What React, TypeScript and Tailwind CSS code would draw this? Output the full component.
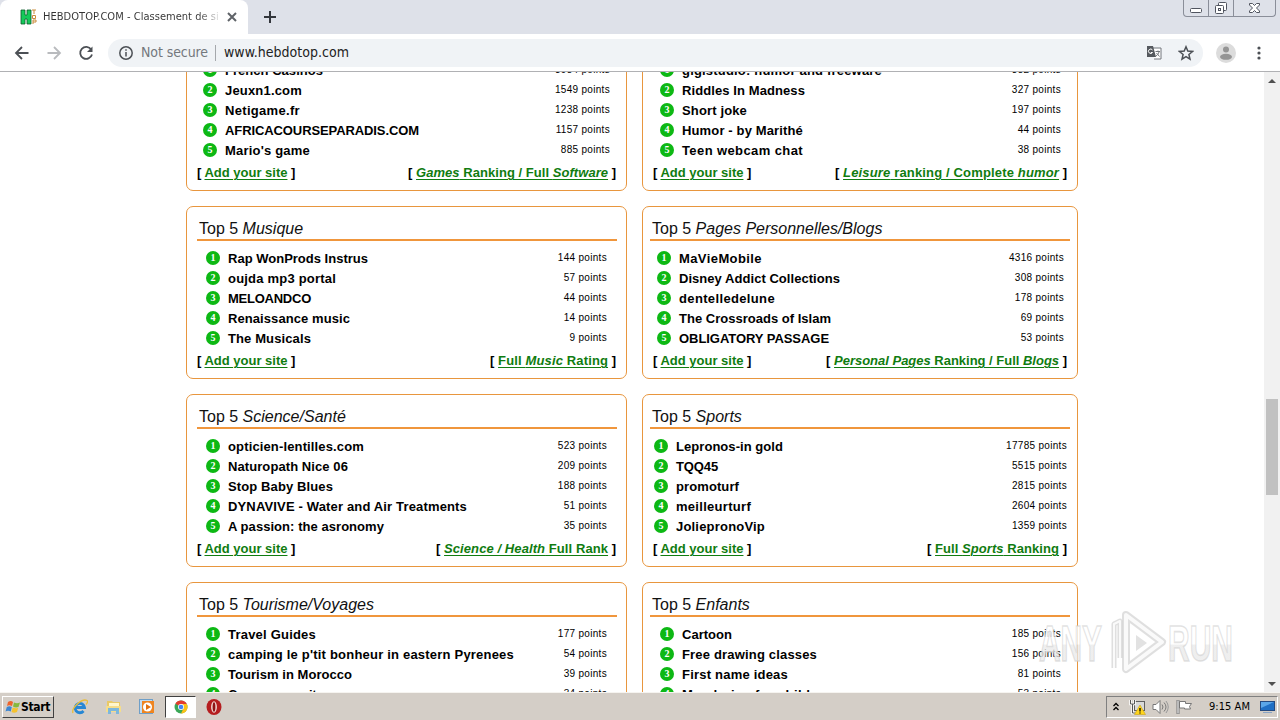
import React, { useLayoutEffect, useRef } from 'react';
import { clsx } from 'clsx';

interface Site {
    name: string;
    points: number;
    width: number;
}

interface Category {
    title: string;
    sites: Site[];
    more: React.ReactNode;
    moreWidth: number;
    // horizontal inset of the list, the tables are centered in their card
    rowClass: string;
}

const CATEGORIES: Category[] = [
    {
        title: 'Jeux',
        rowClass: 'pl-[6px] pr-[7px]',
        more: <><i>Games</i> Ranking / Full <i>Software</i></>,
        moreWidth: 192,
        sites: [
            { name: 'French Casinos', points: 3984, width: 98 },
            { name: 'Jeuxn1.com', points: 1549, width: 77 },
            { name: 'Netigame.fr', points: 1238, width: 75 },
            { name: 'AFRICACOURSEPARADIS.COM', points: 1157, width: 194 },
            { name: "Mario's game", points: 885, width: 85 },
        ],
    },
    {
        title: 'Loisirs/Humour',
        rowClass: 'pl-[10px] pr-[9px]',
        more: <><i>Leisure</i> ranking / Complete <i>humor</i></>,
        moreWidth: 216,
        sites: [
            { name: 'gigistudio: humor and freeware', points: 382, width: 200 },
            { name: 'Riddles In Madness', points: 327, width: 123 },
            { name: 'Short joke', points: 197, width: 65 },
            { name: 'Humor - by Marithé', points: 44, width: 121 },
            { name: 'Teen webcam chat', points: 38, width: 121 },
        ],
    },
    {
        title: 'Musique',
        rowClass: 'pl-[9px] pr-[10px]',
        more: <>Full <i>Music</i> Rating</>,
        moreWidth: 110,
        sites: [
            { name: 'Rap WonProds Instrus', points: 144, width: 140 },
            { name: 'oujda mp3 portal', points: 57, width: 108 },
            { name: 'MELOANDCO', points: 44, width: 83 },
            { name: 'Renaissance music', points: 14, width: 122 },
            { name: 'The Musicals', points: 9, width: 83 },
        ],
    },
    {
        title: 'Pages Personnelles/Blogs',
        rowClass: 'pl-[7px] pr-[6px]',
        more: <><i>Personal Pages</i> Ranking / Full <i>Blogs</i></>,
        moreWidth: 225,
        sites: [
            { name: 'MaVieMobile', points: 4316, width: 83 },
            { name: 'Disney Addict Collections', points: 308, width: 161 },
            { name: 'dentelledelune', points: 178, width: 96 },
            { name: 'The Crossroads of Islam', points: 69, width: 152 },
            { name: 'OBLIGATORY PASSAGE', points: 53, width: 150 },
        ],
    },
    {
        title: 'Science/Santé',
        rowClass: 'pl-[9px] pr-[10px]',
        more: <><i>Science / Health</i> Full Rank</>,
        moreWidth: 164,
        sites: [
            { name: 'opticien-lentilles.com', points: 523, width: 136 },
            { name: 'Naturopath Nice 06', points: 209, width: 120 },
            { name: 'Stop Baby Blues', points: 188, width: 105 },
            { name: 'DYNAVIVE - Water and Air Treatments', points: 51, width: 239 },
            { name: 'A passion: the asronomy', points: 35, width: 156 },
        ],
    },
    {
        title: 'Sports',
        rowClass: 'pl-[4px] pr-[3px]',
        more: <>Full <i>Sports</i> Ranking</>,
        moreWidth: 124,
        sites: [
            { name: 'Lepronos-in gold', points: 17785, width: 107 },
            { name: 'TQQ45', points: 5515, width: 42 },
            { name: 'promoturf', points: 2815, width: 63 },
            { name: 'meilleurturf', points: 2604, width: 75 },
            { name: 'JoliepronoVip', points: 1359, width: 89 },
        ],
    },
    {
        title: 'Tourisme/Voyages',
        rowClass: 'pl-[9px] pr-[10px]',
        more: <>Full <i>Travel</i> Ranking</>,
        moreWidth: 122,
        sites: [
            { name: 'Travel Guides', points: 177, width: 88 },
            { name: "camping le p'tit bonheur in eastern Pyrenees", points: 54, width: 286 },
            { name: 'Tourism in Morocco', points: 39, width: 124 },
            { name: 'Cannes security', points: 34, width: 95 },
        ],
    },
    {
        title: 'Enfants',
        rowClass: 'pl-[10px] pr-[9px]',
        more: <>Full <i>Kids</i> Ranking</>,
        moreWidth: 112,
        sites: [
            { name: 'Cartoon', points: 185, width: 50 },
            { name: 'Free drawing classes', points: 156, width: 135 },
            { name: 'First name ideas', points: 81, width: 106 },
            { name: 'Mandarine for children', points: 53, width: 150 },
        ],
    },
];

// Spreads the letters so that the text takes the given width
const FitText: React.FC<{ width: number; className?: string; children: React.ReactNode }> = ({ width, className, children }) => {
    const ref = useRef<HTMLSpanElement>(null);

    useLayoutEffect(() => {
        const el = ref.current;
        if (!el) return;
        el.style.letterSpacing = '0px';
        const natural = el.getBoundingClientRect().width;
        const count = el.textContent?.length || 1;
        el.style.letterSpacing = `${(width - natural) / count}px`;
    }, [width]);

    return <span ref={ref} className={clsx('whitespace-nowrap', className)}>{children}</span>;
};

const FooterLink: React.FC<{ width: number; children: React.ReactNode }> = ({ width, children }) => (
    <span className="whitespace-pre">
        {'[ '}<FitText width={width} className="text-[#107c10] underline decoration-1 underline-offset-2">{children}</FitText>{' ]'}
    </span>
);

const CategoryCard: React.FC<{ category: Category; right: boolean }> = ({ category, right }) => (
    <section className={clsx('h-[173px] rounded-[7px] border border-[#e8963e] pt-[11px]', right ? 'px-[7px]' : 'px-[10px]')}>
        <h2 className="h-[23px] w-[420px] border-b-2 border-[#f0963c] pl-[2px] text-[16px] leading-[21px] text-[#111]">
            Top 5 <i>{category.title}</i>
        </h2>
        <ol className={clsx('mt-[7px] w-[420px]', category.rowClass)}>
            {category.sites.map((site, i) => (
                <li key={site.name} className="flex h-5 items-center">
                    <span className="mr-2 flex size-[14px] items-center justify-center rounded-full bg-[#0db814] font-['Liberation_Serif'] text-[10px] leading-[14px] font-bold text-white">
                        {i + 1}
                    </span>
                    <FitText width={site.width} className="pt-0.5 text-[13px] leading-[18px] font-bold">{site.name}</FitText>
                    <span className="ml-auto text-[10px] leading-[18px] tracking-[0.3px]">{site.points} points</span>
                </li>
            ))}
        </ol>
        <div className={clsx('flex w-[420px] justify-between pt-[3px] text-[13px] leading-5 font-bold', right ? 'pr-[3px] pl-[3px]' : 'pr-px')}>
            <FooterLink width={83}>Add your site</FooterLink>
            <FooterLink width={category.moreWidth}>{category.more}</FooterLink>
        </div>
    </section>
);

const TabStrip = () => (
    <header className="flex h-[34px] bg-[#dee1e9]">
        <div className="flex h-[34px] w-[248px] items-center rounded-t-[8px] bg-white pl-[20px]">
            <svg width="17" height="16" viewBox="0 0 17 16">
                <path d="M1 1h4v5h2V1h4v14H7v-5H5v5H1z" fill="#14c95a" stroke="#0a5a2a" strokeWidth=".8" />
                <path d="M12 1h4M14 1v4M12.500 6.500h3v3h-3zM13 15v-4h3v2h-3" stroke="#c98a3a" fill="none" />
            </svg>
            <span className="ml-[6px] w-[175px] overflow-hidden bg-linear-to-r from-[#333] from-88% to-[#ddd] bg-clip-text font-['DejaVu_Sans_Condensed','DejaVu_Sans'] text-[11px] whitespace-nowrap text-transparent">
                <FitText width={191}>HEBDOTOP.COM - Classement de sites</FitText>
            </span>
            <svg className="ml-[9px]" width="10" height="10" viewBox="0 0 10 10">
                <path d="M1 1l8 8M9 1L1 9" stroke="#5f6368" strokeWidth="2" />
            </svg>
        </div>
        <svg className="mt-[10px] ml-[15px]" width="14" height="14" viewBox="0 0 14 14">
            <path d="M7 1v12M1 7h12" stroke="#33363c" strokeWidth="2" />
        </svg>
        <div className="mr-[4px] ml-auto flex h-[17px] w-[93px] rounded-b-[4px] border border-t-0 border-[#8a8e99] text-[#50545f]">
            <div className="w-[25px] border-r border-[#8a8e99]">
                <svg width="24" height="16" viewBox="0 0 24 16">
                    <rect x="6.500" y="8.500" width="11" height="4" rx="1" fill="#fff" stroke="currentColor" />
                </svg>
            </div>
            <div className="w-[25px] border-r border-[#8a8e99]">
                <svg width="24" height="16" viewBox="0 0 24 16" fill="#fff" stroke="currentColor">
                    <rect x="9.500" y="2.500" width="8" height="8" rx="1" />
                    <rect x="6.500" y="5.500" width="8" height="8" rx="1" />
                    <rect x="9.500" y="8.500" width="2" height="2" />
                </svg>
            </div>
            <svg width="41" height="16" viewBox="0 0 41 16">
                <path d="M15.500 3.500h3l2 2 2-2h3v1.500l-3 3 3 3v1.500h-3l-2-2-2 2h-3v-1.500l3-3-3-3z" fill="#fff" stroke="currentColor" />
            </svg>
        </div>
    </header>
);

const Toolbar = () => (
    <div className="flex h-[38px] items-center border-b border-[#b0b1b4] bg-white pl-[14px] text-[#4c5055]">
        <svg width="16" height="16" viewBox="0 0 16 16" fill="none" stroke="currentColor" strokeWidth="1.800">
            <path d="M14.500 8H2M8 2L2 8l6 6" />
        </svg>
        <svg className="ml-[16px] text-[#b9bbbe]" width="16" height="16" viewBox="0 0 16 16" fill="none" stroke="currentColor" strokeWidth="1.800">
            <path d="M1.500 8H14M8 2l6 6-6 6" />
        </svg>
        <svg className="ml-[16px]" width="16" height="16" viewBox="0 0 16 16">
            <path d="M13.200 4.500A6 6 0 1 0 14 9.500" fill="none" stroke="currentColor" strokeWidth="1.800" />
            <path d="M14.500 1.500v5.500H9z" fill="currentColor" />
        </svg>
        <div className="ml-[14px] flex h-7 w-[1095px] items-center rounded-full bg-[#f0f3f6] pl-[11px] font-['DejaVu_Sans_Condensed','DejaVu_Sans'] text-[14px]">
            <svg width="14" height="14" viewBox="0 0 14 14">
                <circle cx="7" cy="7" r="6.200" fill="none" stroke="currentColor" strokeWidth="1.500" />
                <path d="M7 6v4.500M7 3.300v1.500" stroke="currentColor" strokeWidth="1.500" />
            </svg>
            <FitText width={67} className="ml-[8px] text-[#74787d]">Not secure</FitText>
            <span className="ml-[7px] h-4 w-px bg-[#a5a8ac]" />
            <FitText width={125} className="ml-[8px] text-[#222]">www.hebdotop.com</FitText>
            <svg className="ml-auto" width="16" height="16" viewBox="0 0 16 16">
                <path d="M6 3h9v11H8" fill="#fff" stroke="#73777c" />
                <path d="M1 1h6l3 11H1z" fill="#55595e" />
                <path d="M6.500 5A2.200 2.200 0 1 0 6.500 7.500H4.800" fill="none" stroke="#fff" />
                <path d="M9.500 6.500h4.500M12 5.500v1M13 7c-.5 2-1.500 3-3 4M10.500 8l3 3.500" fill="none" stroke="#73777c" />
            </svg>
            <svg className="mr-[9px] ml-[16px]" width="16" height="16" viewBox="0 0 16 16">
                <path d="M8 1.800l1.800 4.300 4.700.4-3.600 3 1.100 4.600L8 11.700l-4 2.400 1.100-4.600-3.600-3 4.700-.4z" fill="none" stroke="currentColor" strokeWidth="1.500" />
            </svg>
        </div>
        <svg className="ml-[13px]" width="20" height="20" viewBox="0 0 20 20">
            <circle cx="10" cy="10" r="10" fill="#dcdcdc" />
            <circle cx="10" cy="6.500" r="3" fill="#959595" />
            <ellipse cx="10" cy="13.800" rx="6" ry="3" fill="#959595" />
        </svg>
        <svg className="ml-[21px]" width="4" height="14" viewBox="0 0 4 14" fill="currentColor">
            <circle cx="2" cy="2" r="1.600" /><circle cx="2" cy="7" r="1.600" /><circle cx="2" cy="12" r="1.600" />
        </svg>
    </div>
);

const Scrollbar = () => (
    <div className="flex w-4 flex-col items-center bg-[#f1f1f1] pt-[7px] pb-[6px]">
        <svg width="8" height="4" viewBox="0 0 8 4"><path d="M0 4l4-4 4 4z" fill="#505050" /></svg>
        <div className="mt-[316px] h-[96px] w-3 bg-[#c1c1c1]" />
        <svg className="mt-auto" width="8" height="4" viewBox="0 0 8 4"><path d="M0 0l4 4 4-4z" fill="#505050" /></svg>
    </div>
);

const Watermark = () => (
    <svg className="absolute top-[532px] left-[1036px]" width="204" height="76" viewBox="0 0 204 76">
        <defs>
            <linearGradient id="mark" x1="0" y1="0" x2="0" y2="1">
                <stop offset=".5" stopColor="#fff" stopOpacity=".8" />
                <stop offset=".52" stopColor="#e9e9e9" stopOpacity=".75" />
            </linearGradient>
        </defs>
        <g fill="none" stroke="#c9c9c9" strokeOpacity=".6" strokeWidth="8" strokeLinejoin="round">
            <path d="M78 64V20l6-3v37" strokeWidth="5" />
            <path d="M90 11l36 27-36 27z" />
        </g>
        <g fill="none" stroke="#fff" strokeOpacity=".85" strokeWidth="4" strokeLinejoin="round">
            <path d="M78 64V20l6-3v37" strokeWidth="2" />
            <path d="M90 11l36 27-36 27z" />
        </g>
        <path d="M100 31l11 8-11 8z" fill="#e2e2e2" />
        <g fontFamily="Liberation Sans Narrow, Liberation Sans" fontWeight="700" fontSize="50" fill="url(#mark)" stroke="#cfcfcf" strokeOpacity=".6" strokeWidth="1.600">
            <text x="3" y="57" textLength="63" lengthAdjust="spacingAndGlyphs">ANY</text>
            <text x="132" y="57" textLength="65" lengthAdjust="spacingAndGlyphs">RUN</text>
        </g>
    </svg>
);

const Taskbar = () => (
    <footer className="flex h-7 items-center border-t border-[#f6f4f0] bg-[#d4cec7] font-['DejaVu_Sans_Condensed'] text-[11px] text-black">
        <button className="ml-[2px] flex h-[22px] w-[52px] items-center border border-t-white border-r-[#404040] border-b-[#404040] border-l-white pl-[2px] font-bold">
            <svg width="16" height="16" viewBox="0 0 16 16">
                <path d="M3 3q3-2 5 0L7 7Q4 5.500 2 7z" fill="#ee642c" />
                <path d="M9 3.500q3 1.500 6 0L13.500 8q-3 1.200-5.500-.5z" fill="#86b83d" />
                <path d="M1.800 8q2.500-1.500 5 0l-1 4.500Q3 11 .5 12.500z" fill="#3c86d2" />
                <path d="M7.700 8.500q3 1.500 5.500.3L12 13q-3 1.500-5.500 0z" fill="#f5c22e" />
            </svg>
            <FitText width={29} className="pt-px text-[12px]">Start</FitText>
        </button>
        <svg className="ml-[18px]" width="16" height="16" viewBox="0 0 16 16" fill="none">
            <path d="M3.500 8.500h9A4.700 4.700 0 1 0 11.500 12" stroke="#2787d4" strokeWidth="2.800" />
            <path d="M1 14C-1 9 10-1 15 1.500c1 1 0 3-1 4" stroke="#e9bd3c" strokeWidth="1.300" />
        </svg>
        <svg className="ml-[17px]" width="17" height="16" viewBox="0 0 17 16">
            <path d="M2 2h5l1 1h7v10H2z" fill="#e9c968" />
            <path d="M4 4h10v5H4z" fill="#fff6cc" />
            <path d="M1 7h15v6H1z" fill="#f5dd8b" />
            <path d="M3 15V9h11v6h-3v-3H6v3z" fill="#7db7dc" />
        </svg>
        <svg className="ml-[17px]" width="16" height="16" viewBox="0 0 16 16">
            <rect x=".5" y=".5" width="13" height="14" fill="#c2dcf0" stroke="#6f9fc8" />
            <rect x="3" y="2" width="12" height="12" fill="#ef8520" />
            <circle cx="8.500" cy="8" r="4.500" fill="#fff" />
            <path d="M7 5l5 3-5 3z" fill="#e3720f" />
        </svg>
        <div className="ml-[10px] flex h-[22px] w-[31px] items-center justify-center border border-t-[#404040] border-r-white border-b-white border-l-[#404040] bg-white">
            <svg width="14" height="14" viewBox="0 0 14 14">
                <circle cx="7" cy="7" r="6.500" fill="#3aa757" />
                <path d="M7 7L1.400 3.700A6.500 6.500 0 0 1 12.800 4H7z" fill="#e33b2e" />
                <path d="M7 4h5.800A6.500 6.500 0 0 1 7 13.500L9.700 8z" fill="#fbc116" />
                <circle cx="7" cy="7" r="3" fill="#fff" />
                <circle cx="7" cy="7" r="2.300" fill="#4285f4" />
            </svg>
        </div>
        <svg className="ml-[10px]" width="16" height="16" viewBox="0 0 16 16">
            <ellipse cx="8" cy="8" rx="7.500" ry="8" fill="#b51d1f" />
            <ellipse cx="8" cy="8" rx="2.900" ry="5.800" fill="#f3dcd8" />
            <ellipse cx="8" cy="8" rx="1.400" ry="4.800" fill="#8e1214" />
        </svg>
        <div className="mr-[2px] ml-auto flex h-[22px] w-[172px] items-center border border-t-[#808080] border-r-white border-b-white border-l-[#808080]">
            <svg className="ml-[6px]" width="6" height="9" viewBox="0 0 6 9" fill="none" stroke="#000" strokeWidth="1.300">
                <path d="M.5 4L3 1.500 5.500 4M.5 8L3 5.500 5.500 8" />
            </svg>
            <svg className="ml-[10px]" width="17" height="16" viewBox="0 0 17 16">
                <rect x="5.500" y="2.500" width="10" height="9" fill="#d9d9d9" stroke="#606060" />
                <path d="M1.500 1v4h4V1M3.500 5v9h3" fill="none" stroke="#fff" strokeWidth="2.500" />
                <path d="M1.500 1v4h4V1M3.500 5v9h3" fill="none" stroke="#555" />
                <path d="M11 6l5.500 9.500h-11z" fill="#ffd51c" stroke="#c79b00" strokeWidth=".5" />
                <path d="M11 9v3.500M11 13.500v1" stroke="#000" strokeWidth="1.300" />
            </svg>
            <svg className="ml-[6px]" width="17" height="16" viewBox="0 0 17 16" fill="none" stroke="#777">
                <path d="M1 5.500h3l4-4v13l-4-4H1z" fill="#fff" />
                <path d="M10 5.500q2 2.500 0 5M12 3.500q4 4.500 0 9" />
                <path d="M14 2q4.500 6 0 12" stroke="#999" />
            </svg>
            <svg className="ml-[7px]" width="17" height="16" viewBox="0 0 17 16">
                <path d="M3.500 2.500h6v2h6l-2 3 1 2.500h-6V9h-5z" fill="#fff" stroke="#777" />
                <path d="M2 1v14" stroke="#777" strokeWidth="3" />
                <path d="M2 1.500v13" stroke="#fff" />
            </svg>
            <FitText width={41} className="ml-[16px] pt-0.5">9:15 AM</FitText>
            <svg className="ml-[10px]" width="16" height="14" viewBox="0 0 16 14">
                <rect x=".5" y="1.500" width="14" height="9" fill="#1f6fc4" stroke="#244a80" />
                <path d="M1 2h13L1 8z" fill="#5aa6e8" />
                <path d="M3 12.500h9" stroke="#8aa4c4" />
            </svg>
        </div>
    </footer>
);

const App: React.FC = () => (
    <div className="flex h-[720px] w-[1280px] flex-col overflow-hidden bg-white font-['Liberation_Sans',sans-serif] text-black">
        <TabStrip />
        <Toolbar />
        <main className="relative flex h-[620px] justify-between overflow-hidden">
            <div className="-mt-[54px] ml-[186px] grid h-[737px] grid-cols-[441px_436px] gap-[15px]">
                {CATEGORIES.map((category, i) => (
                    <CategoryCard key={category.title} category={category} right={i % 2 === 1} />
                ))}
            </div>
            <Scrollbar />
            <Watermark />
        </main>
        <Taskbar />
    </div>
);

export default App;
